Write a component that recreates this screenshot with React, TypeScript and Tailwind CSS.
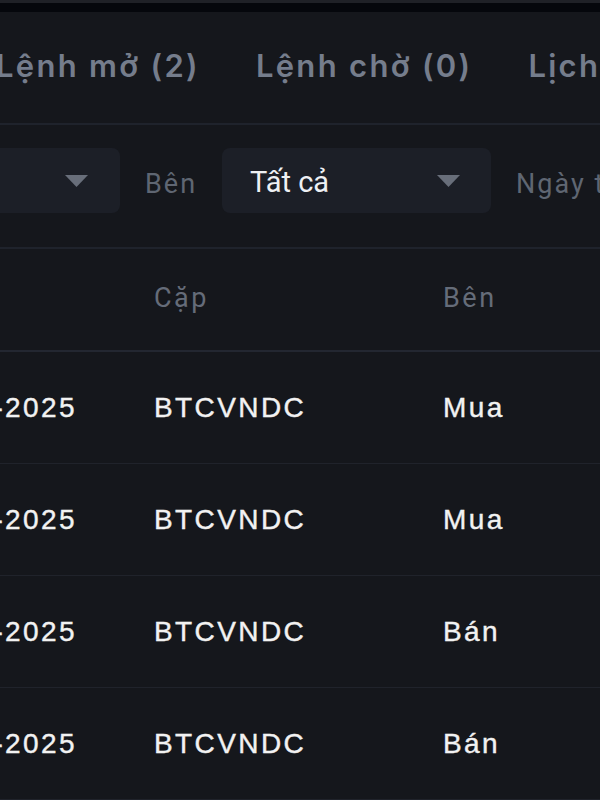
import React from "react";

const Caret = () => (
  <svg width="23" height="12" viewBox="0 0 23 12" className="shrink-0">
    <polygon points="0,0 23,0 11.5,12" fill="#686e7a" />
  </svg>
);

const rows = [
  { date: "14-03-2025", pair: "BTCVNDC", side: "Mua" },
  { date: "14-03-2025", pair: "BTCVNDC", side: "Mua" },
  { date: "13-03-2025", pair: "BTCVNDC", side: "Bán" },
  { date: "13-03-2025", pair: "BTCVNDC", side: "Bán" },
];

export default function App() {
  return (
    <div className="w-[600px] h-[800px] overflow-hidden bg-[#15171c]">
      <div className="h-[3px] bg-[#1f2127]" />
      <div className="h-[9px] bg-[#05070c]" />

      {/* Tabs */}
      <div
        className="h-[111px] flex items-center gap-[56px] -ml-[4px] pb-[2px] text-[31px] font-semibold text-[#757d8c] tracking-[2.3px] whitespace-nowrap"
        style={{ fontFamily: "Inter, 'Noto Sans', sans-serif" }}
      >
        <span className="shrink-0">Lệnh mở (2)</span>
        <span className="shrink-0">Lệnh chờ (0)</span>
        <span className="shrink-0">Lịch sử lệnh</span>
      </div>
      <div className="h-[2px] bg-[#1f232c]" />

      {/* Filters */}
      <div
        className="h-[122px] flex items-start pt-[23px] -ml-[149px] whitespace-nowrap"
        style={{ fontFamily: "Roboto, 'Noto Sans', sans-serif" }}
      >
        <div className="w-[269px] shrink-0 h-[65px] rounded-[8px] bg-[#1c1f27] flex items-center justify-between pl-[28px] pr-[32px]">
          <span className="text-[29px] text-[#eef0f3] pt-[4px]">Tất cả</span>
          <Caret />
        </div>
        <span className="w-[102px] shrink-0 h-[65px] flex items-center pl-[25px] pt-[8px] text-[27px] text-[#5f6672] tracking-[2px]">Bên</span>
        <div className="w-[269px] shrink-0 h-[65px] rounded-[8px] bg-[#1c1f27] flex items-center justify-between pl-[28px] pr-[31px]">
          <span className="text-[29px] text-[#eef0f3] pt-[4px]">Tất cả</span>
          <Caret />
        </div>
        <span className="shrink-0 h-[65px] flex items-center pl-[25px] pt-[8px] text-[27px] text-[#5f6672] tracking-[2px]">Ngày từ</span>
      </div>
      <div className="h-[2px] bg-[#1f232c]" />

      {/* Header */}
      <div
        className="h-[101px] flex items-center pb-[2px] text-[27px] text-[#656c79] tracking-[2.5px] whitespace-nowrap"
        style={{ fontFamily: "Roboto, 'Noto Sans', sans-serif" }}
      >
        <div className="w-[154px] shrink-0" />
        <div className="w-[289px] shrink-0">Cặp</div>
        <div>Bên</div>
      </div>
      <div className="h-[2px] bg-[#232731]" />

      {/* Rows */}
      {rows.map((r, i) => (
        <div key={i}>
          <div
            className="h-[111px] flex items-center text-[28px] text-[#f2f2f2] tracking-[2.4px] whitespace-nowrap"
            style={{ fontFamily: "'Liberation Sans', Arial, sans-serif", WebkitTextStroke: "0.4px #f2f2f2" }}
          >
            <div className="w-[154px] shrink-0 flex justify-end pr-[77px]">
              <span>{r.date}</span>
            </div>
            <div className="w-[289px] shrink-0">{r.pair}</div>
            <div>{r.side}</div>
          </div>
          <div className="h-[1px] bg-[#20232b]" />
        </div>
      ))}
    </div>
  );
}
